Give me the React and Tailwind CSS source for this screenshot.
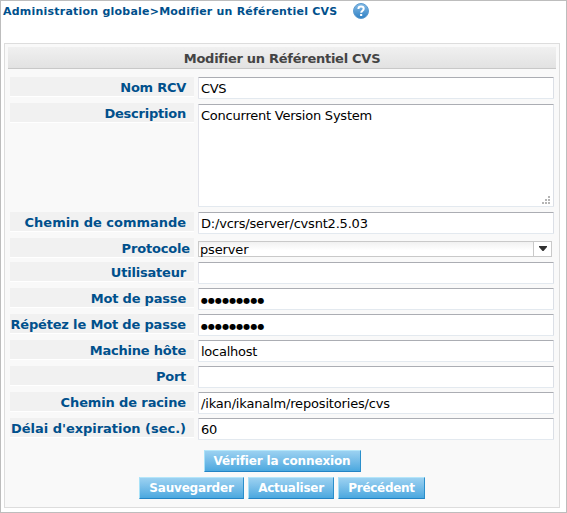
const fields = [
  { label: 'Nom RCV', value: 'CVS', row: 'h-[26px]', ls: 'tracking-[-0.25px]', vs: 'tracking-[-0.3px]' },
  { label: 'Description', value: 'Concurrent Version System', kind: 'area', row: 'h-[109px]', ls: 'tracking-[-0.23px]', vs: 'tracking-[-0.23px]' },
  { label: 'Chemin de commande', value: 'D:/vcrs/server/cvsnt2.5.03', row: 'h-[26px]', ls: 'tracking-[-0.03px]', vs: 'tracking-[-0.2px]' },
  { label: 'Protocole', value: 'pserver', kind: 'select', row: 'h-[24px]', ls: 'tracking-[-0.17px]', vs: 'tracking-[-0.15px]' },
  { label: 'Utilisateur', value: '', row: 'h-[26px]', ls: 'tracking-[-0.2px]', vs: '' },
  { label: 'Mot de passe', value: '●●●●●●●●●', kind: 'password', row: 'h-[26px]', ls: 'tracking-[-0.2px]', vs: '' },
  { label: 'Répétez le Mot de passe', value: '●●●●●●●●●', kind: 'password', row: 'h-[26px]', ls: 'tracking-[-0.17px]', vs: '' },
  { label: 'Machine hôte', value: 'localhost', row: 'h-[26px]', ls: 'tracking-[-0.22px]', vs: 'tracking-[-0.25px]' },
  { label: 'Port', value: '', row: 'h-[26px]', ls: 'tracking-[-0.3px]', vs: '' },
  { label: 'Chemin de racine', value: '/ikan/ikanalm/repositories/cvs', row: 'h-[26px]', ls: 'tracking-[-0.13px]', vs: 'tracking-[-0.17px]' },
  { label: "Délai d'expiration (sec.)", value: '60', row: 'h-[26px]', ls: 'tracking-[-0.03px]', vs: 'tracking-[-0.2px]' },
];

const box = 'w-[356px] rounded-[1px] border border-t-[#abadb3] border-r-[#dbdfe6] border-b-[#e3e9ef] border-l-[#e2e3ea] bg-white pl-[2px]';

function Control({ field }) {
  if (field.kind === 'area') {
    return (
      <div className={`${box} mt-px flex h-[103px] items-start justify-between pt-[3px]`}>
        <span className={`leading-[16px] ${field.vs}`}>{field.value}</span>
        <svg className="mr-[3px] mb-[2px] self-end" width="8" height="8" fill="#b5b5b5" shapeRendering="crispEdges">
          <path d="M6 0h2v2h-2zM3 3h2v2h-2zM6 3h2v2h-2zM0 6h2v2h-2zM3 6h2v2h-2zM6 6h2v2h-2z" />
        </svg>
      </div>
    );
  }
  if (field.kind === 'select') {
    return (
      <div className="mt-[3px] flex h-[16px] w-[354px] border border-[#c9c9c9] bg-linear-to-b from-[#f1f1f1] to-white to-60%">
        <span className={`flex-1 pl-px leading-[16px] ${field.vs}`}>{field.value}</span>
        <span className="flex w-[18px] items-start justify-center border-l border-[#c9c9c9] bg-white pt-[4px]">
          <svg width="8" height="5" viewBox="0 0 8 5" fill="#303030"><path d="M0 0h8v1L4.5 5h-1L0 1z" /></svg>
        </span>
      </div>
    );
  }
  if (field.kind === 'password') {
    return <div className={`${box} h-[22px] pt-px text-[8px] leading-[22px] tracking-[0.08px]`}>{field.value}</div>;
  }
  return <div className={`${box} h-[22px] leading-[21px] ${field.vs}`}><span>{field.value}</span></div>;
}

function Button({ children, width, spacing }) {
  return (
    <button className={`h-[22px] border border-t-[#b5e6fa] border-r-[#2b8fcb] border-b-[#2383c4] border-l-[#a9e2f8] bg-linear-to-b from-[#9bd1f1] to-[#4aa8df] text-center text-[12px] leading-[20px] font-bold whitespace-nowrap text-white ${width} ${spacing}`}>
      {children}
    </button>
  );
}

function HelpIcon() {
  return (
    <svg className="ml-[16px]" width="16" height="16" viewBox="0 0 16 16">
      <defs>
        <linearGradient id="help" x1="0" y1="0" x2="0" y2="1">
          <stop offset="0" stopColor="#86bce6" />
          <stop offset="1" stopColor="#2f80c4" />
        </linearGradient>
      </defs>
      <circle cx="8" cy="8" r="7.5" fill="url(#help)" stroke="#5c9bd0" />
      <path d="M5.4 6.1c0-3.4 5.3-3.1 5.3-.3 0 2-2.5 1.8-2.5 4" fill="none" stroke="#fff" strokeWidth="2" />
      <rect x="7.1" y="11" width="2.1" height="2" fill="#fff" />
    </svg>
  );
}

export default function App() {
  return (
    <div className="h-[513px] w-[567px] border border-[#bdbdbd] bg-white px-[3px] font-['DejaVu_Sans',sans-serif] text-[13px] text-black">
      <div className="flex h-[42px] items-start pt-[2px]">
        <h1 className="-ml-px w-[334px] text-[11px] leading-[17px] font-bold tracking-[0.22px] whitespace-nowrap text-[#00508c]"><span>Administration globale&gt;Modifier un Référentiel CVS</span></h1>
        <HelpIcon />
      </div>
      <div className="h-[465px] w-[556px] border border-[#dddddd] bg-[#f9f9f9] p-[3px]">
        <h2 className="h-[22px] border-b border-[#c8c8c8] bg-linear-to-b from-[#f0f0f0] to-[#e2e2e2] text-center leading-[23px] font-bold tracking-[-0.27px] text-[#444444]"><span>Modifier un Référentiel CVS</span></h2>
        <div className="mt-[8px] pl-[2px]">
          {fields.map((field) => (
            <div key={field.label} className={`flex items-start gap-[4px] ${field.row}`}>
              <div className={`h-[20px] w-[184px] border-b border-white bg-[#f1f1f1] text-right leading-[22px] font-bold whitespace-nowrap text-[#00508c] ${field.kind === 'select' ? 'pr-[4px]' : 'pr-[8px]'} ${field.ls}`}><span>{field.label}</span></div>
              <Control field={field} />
            </div>
          ))}
        </div>
        <div className="mt-[6px] flex justify-center">
          <Button width="w-[157px]" spacing="tracking-[-0.14px]">Vérifier la connexion</Button>
        </div>
        <div className="mt-[5px] flex justify-center gap-[4px]">
          <Button width="w-[105px]" spacing="tracking-[-0.2px]">Sauvegarder</Button>
          <Button width="w-[86px]" spacing="tracking-[-0.25px]">Actualiser</Button>
          <Button width="w-[87px]" spacing="tracking-[-0.3px]">Précédent</Button>
        </div>
      </div>
    </div>
  );
}
